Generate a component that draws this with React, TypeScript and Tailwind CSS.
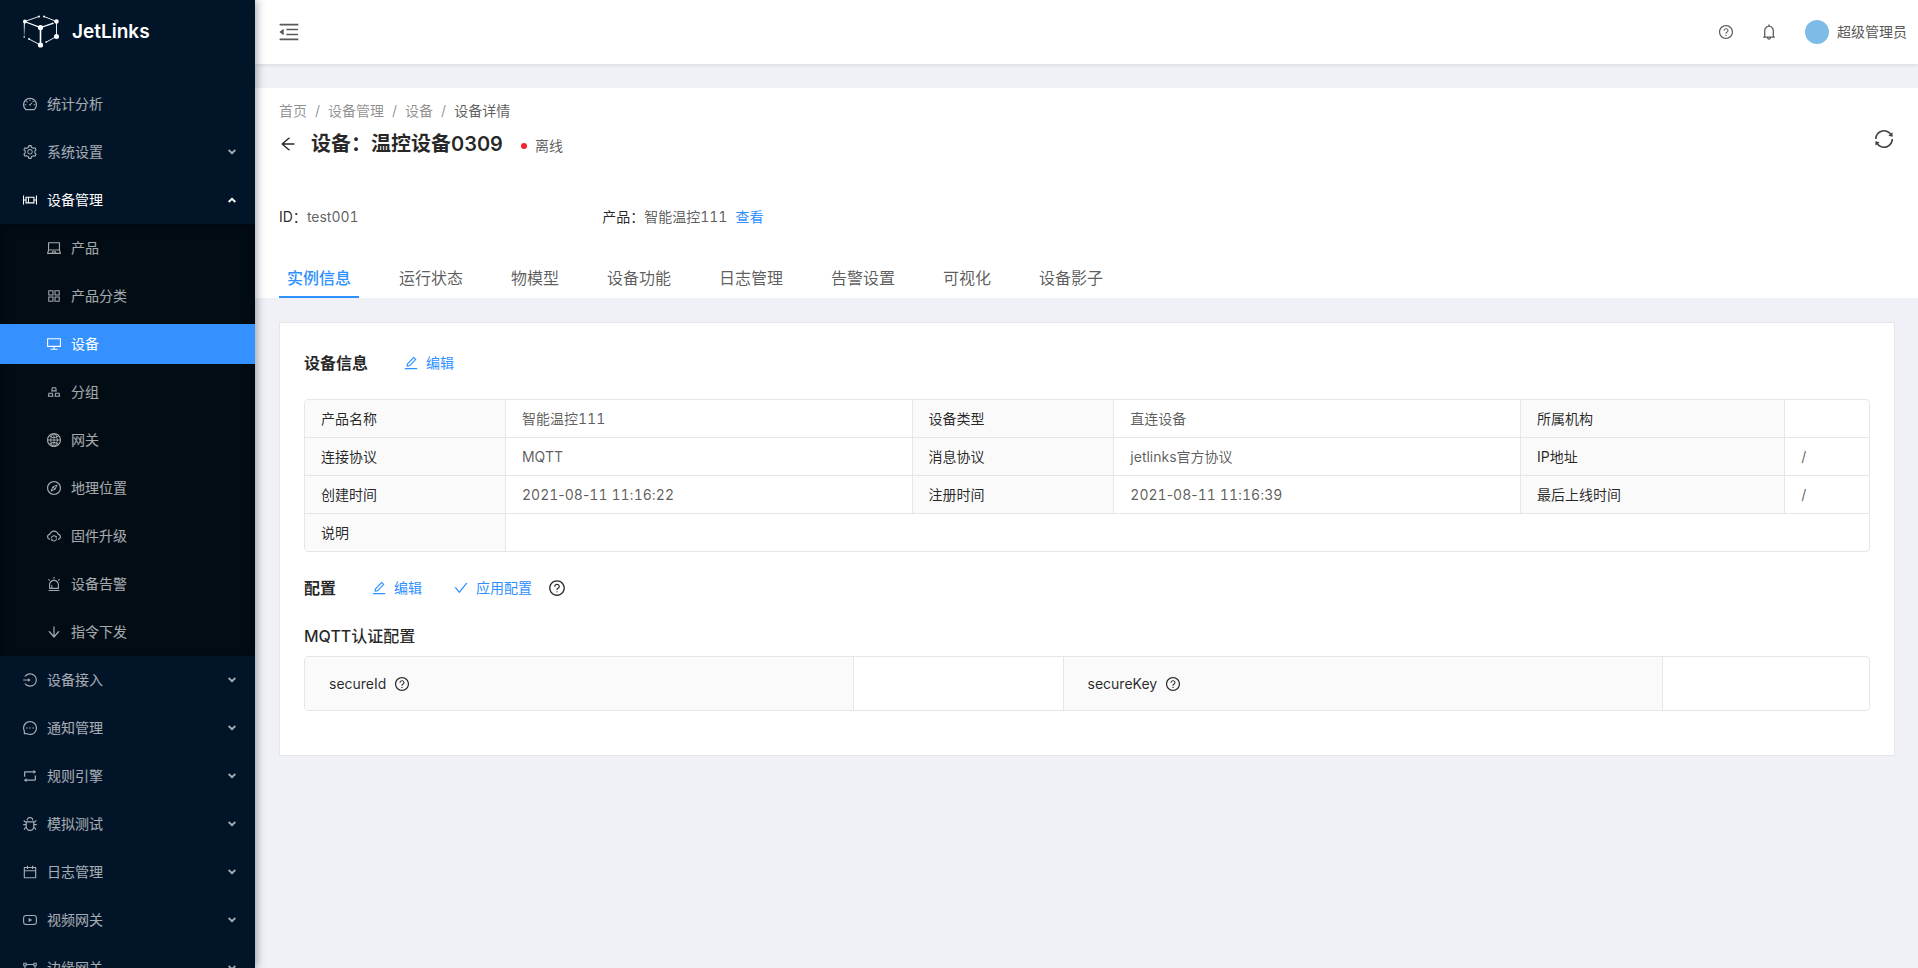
import React from 'react';
import { IconType } from 'react-icons';
import {
  AiOutlineAlert,
  AiOutlineAppstore,
  AiOutlineArrowDown,
  AiOutlineArrowLeft,
  AiOutlineBell,
  AiOutlineBoxPlot,
  AiOutlineBug,
  AiOutlineCalendar,
  AiOutlineCheck,
  AiOutlineCloudSync,
  AiOutlineCompass,
  AiOutlineDashboard,
  AiOutlineDesktop,
  AiOutlineEdit,
  AiOutlineGateway,
  AiOutlineGlobal,
  AiOutlineGold,
  AiOutlineLaptop,
  AiOutlineLogin,
  AiOutlineMenuFold,
  AiOutlineMessage,
  AiOutlineQuestionCircle,
  AiOutlineRetweet,
  AiOutlineSetting,
  AiOutlineSync,
  AiOutlineYoutube,
} from 'react-icons/ai';

interface MenuEntry {
  name: string;
  icon: IconType;
  leaf?: boolean;
  children?: MenuEntry[];
}

const menu: MenuEntry[] = [
  { name: '统计分析', icon: AiOutlineDashboard, leaf: true },
  { name: '系统设置', icon: AiOutlineSetting },
  {
    name: '设备管理',
    icon: AiOutlineBoxPlot,
    children: [
      { name: '产品', icon: AiOutlineLaptop },
      { name: '产品分类', icon: AiOutlineAppstore },
      { name: '设备', icon: AiOutlineDesktop },
      { name: '分组', icon: AiOutlineGold },
      { name: '网关', icon: AiOutlineGlobal },
      { name: '地理位置', icon: AiOutlineCompass },
      { name: '固件升级', icon: AiOutlineCloudSync },
      { name: '设备告警', icon: AiOutlineAlert },
      { name: '指令下发', icon: AiOutlineArrowDown },
    ],
  },
  { name: '设备接入', icon: AiOutlineLogin },
  { name: '通知管理', icon: AiOutlineMessage },
  { name: '规则引擎', icon: AiOutlineRetweet },
  { name: '模拟测试', icon: AiOutlineBug },
  { name: '日志管理', icon: AiOutlineCalendar },
  { name: '视频网关', icon: AiOutlineYoutube },
  { name: '边缘网关', icon: AiOutlineGateway },
];

const tabs = ['实例信息', '运行状态', '物模型', '设备功能', '日志管理', '告警设置', '可视化', '设备影子'];

const infoRows = [
  ['产品名称', '智能温控111', '设备类型', '直连设备', '所属机构', ''],
  ['连接协议', 'MQTT', '消息协议', 'jetlinks官方协议', 'IP地址', '/'],
  ['创建时间', '2021-08-11 11:16:22', '注册时间', '2021-08-11 11:16:39', '最后上线时间', '/'],
];

const Logo: React.FC = () => (
  <svg width="38" height="34" viewBox="0 0 38 34" fill="none" stroke="#fff" aria-hidden="true">
    <defs>
      <linearGradient id="fade" gradientUnits="userSpaceOnUse" x1="0" y1="6" x2="0" y2="22">
        <stop offset="0" stopColor="#fff" />
        <stop offset="1" stopColor="#fff" stopOpacity="0.1" />
      </linearGradient>
    </defs>
    <path d="M1.5 6.5 17.5 12.5 29.8 8.3" strokeWidth="1.3" />
    <path d="M17.5 12.5V30" strokeWidth="1.6" />
    <path d="M1.5 6.5 16 1.5M21 1.5 33.5 6.5V21.5L23.2 27.1M17.5 30 6 24" strokeWidth="0.9" />
    <path d="M1.4 6.5V22" stroke="url(#fade)" strokeWidth="1.3" />
    <g fill="#fff" stroke="none">
      <circle cx="1.9" cy="6.5" r="1.9" />
      <circle cx="17.5" cy="12.5" r="2.6" />
      <circle cx="33.5" cy="6.5" r="2.2" />
      <circle cx="33.5" cy="21.5" r="2.5" />
      <circle cx="17.5" cy="30" r="2.6" />
      <circle cx="16" cy="1.5" r="1" />
      <circle cx="21" cy="1.5" r="1" />
      <circle cx="29.8" cy="8.3" r="0.9" />
      <circle cx="23.2" cy="27.1" r="0.9" />
      <circle cx="1.2" cy="22" r="0.8" />
      <circle cx="6" cy="24" r="0.9" />
    </g>
  </svg>
);

const Chevron: React.FC<{ open?: boolean }> = ({ open }) => (
  <svg
    width="8"
    height="6"
    viewBox="0 0 8 6"
    fill="none"
    stroke="currentColor"
    strokeWidth="1.8"
    className={open ? 'rotate-180' : ''}
    aria-hidden="true"
  >
    <path d="M0.7 1 4 4.2 7.3 1" />
  </svg>
);

// Digits line up between rows while the separators keep their own width
const Figures: React.FC<{ text: string }> = ({ text }) => (
  <>
    {text.split(/(\d+)/).map((part, i) =>
      i % 2 === 1 ? (
        <span key={i} className="tabular-nums">
          {part}
        </span>
      ) : (
        part
      )
    )}
  </>
);

const Sidebar: React.FC = () => (
  <aside className="sticky top-0 z-10 h-screen w-[255px] shrink-0 overflow-hidden bg-[#021428] shadow-[2px_0_8px_rgba(0,21,41,0.35)]">
    <a href="#" className="flex h-16 items-center gap-[11px] pl-[23px]">
      <Logo />
      <h1 className="text-[19px] font-semibold text-white">JetLinks</h1>
    </a>
    <nav className="mt-4 text-sm text-white/65">
      {menu.map((item) => (
        <div key={item.name}>
          <a
            href="#"
            className={`flex h-12 items-center gap-[9px] pr-[19px] pl-[22px] ${item.children ? 'text-white' : ''}`}
          >
            <item.icon className="size-4" />
            <span className="flex-1">{item.name}</span>
            {!item.leaf && <Chevron open={!!item.children} />}
          </a>
          {item.children && (
            <div className="bg-[#020c15] shadow-[inset_0_2px_8px_rgba(0,0,0,0.45)]">
              {item.children.map((child) => (
                <div key={child.name} className="py-1">
                  <a
                    href="#"
                    className={`flex h-10 items-center gap-[9px] pl-[46px] ${
                      child.name === '设备' ? 'bg-[#3591ff] text-white' : ''
                    }`}
                  >
                    <child.icon className="size-4" />
                    {child.name}
                  </a>
                </div>
              ))}
            </div>
          )}
        </div>
      ))}
    </nav>
  </aside>
);

const TopBar: React.FC = () => (
  <header className="relative flex h-16 items-center bg-white pr-[11px] pl-[22px] shadow-[0_1px_4px_rgba(0,21,41,0.1)]">
    <button type="button" aria-label="收起菜单" className="text-[#595959]">
      <AiOutlineMenuFold className="size-6" />
    </button>
    <div className="ml-auto flex items-center text-[#595959]">
      <button type="button" aria-label="帮助" className="px-3">
        <AiOutlineQuestionCircle className="size-4" />
      </button>
      <button type="button" aria-label="消息" className="ml-0.5 px-3">
        <AiOutlineBell className="size-[18px]" />
      </button>
      <button type="button" className="ml-[15px] flex items-center gap-2 text-sm">
        <span className="size-6 rounded-full bg-[#7dbce6]" />
        超级管理员
      </button>
    </div>
  </header>
);

const PageHeader: React.FC = () => (
  <section className="bg-white pt-3 pr-[23px] pl-6">
    <nav className="flex gap-2 text-sm leading-[22px] text-black/45">
      <a href="#">首页</a>
      <span>/</span>
      <a href="#">设备管理</a>
      <span>/</span>
      <a href="#">设备</a>
      <span>/</span>
      <span className="text-black/65">设备详情</span>
    </nav>
    <div className="mt-1.5 flex items-start">
      <div className="flex h-8 items-center text-black/85">
        <button type="button" aria-label="返回" className="mr-3.5">
          <AiOutlineArrowLeft className="size-[18px]" />
        </button>
        <h2 className="text-xl font-semibold">设备：温控设备0309</h2>
        <span className="mt-1 ml-[18px] flex items-center gap-2 text-sm text-black/65">
          <i className="size-1.5 rounded-full bg-[#f5222d]" />
          离线
        </span>
      </div>
      <button type="button" aria-label="刷新" className="ml-auto text-black/75">
        <AiOutlineSync className="size-[22px]" />
      </button>
    </div>
    <dl className="mt-[46px] grid grid-cols-5 text-sm leading-[22px] tabular-nums">
      <div className="flex">
        <dt className="text-black/85">ID：</dt>
        <dd className="text-black/65">test001</dd>
      </div>
      <div className="flex">
        <dt className="text-black/85">产品：</dt>
        <dd className="text-black/65">智能温控111</dd>
        <dd>
          <a href="#" className="ml-2 text-[#2f90ff]">
            查看
          </a>
        </dd>
      </div>
    </dl>
    <div role="tablist" className="mt-8 flex gap-8">
      {tabs.map((tab, i) => (
        <button
          key={tab}
          type="button"
          role="tab"
          aria-selected={i === 0}
          className={`h-[38px] border-b-2 px-2 text-base ${
            i === 0 ? 'border-[#2f90ff] font-medium text-[#2f90ff]' : 'border-transparent text-black/65'
          }`}
        >
          {tab}
        </button>
      ))}
    </div>
  </section>
);

const LinkButton: React.FC<{ icon: IconType; text: string }> = ({ icon: Icon, text }) => (
  <button type="button" className="flex h-8 items-center gap-[7px] pr-4 pl-[15px] text-sm text-[#2f90ff]">
    <Icon className="size-4" />
    {text}
  </button>
);

const label = 'border-r border-[#e6e6e6] bg-[#fafafa] text-left font-normal text-black/85';

const InfoTable: React.FC = () => (
  <div className="overflow-hidden rounded-sm border border-[#e6e6e6]">
    <table className="w-full table-fixed border-separate border-spacing-0 text-sm leading-[22px]">
      <colgroup>
        <col className="w-[12.85%]" />
        <col className="w-[26%]" />
        <col className="w-[12.9%]" />
        <col className="w-[26%]" />
        <col className="w-[16.9%]" />
        <col className="w-[5.35%]" />
      </colgroup>
      <tbody>
        {infoRows.map((row) => (
          <tr key={row[0]}>
            {row.map((cell, i) =>
              i % 2 === 0 ? (
                <th key={i} scope="row" className={`h-[38px] border-b px-4 ${label}`}>
                  {cell}
                </th>
              ) : (
                <td
                  key={i}
                  className="h-[38px] border-r border-b border-[#e6e6e6] px-4 text-black/65 last:border-r-0"
                >
                  <Figures text={cell} />
                </td>
              )
            )}
          </tr>
        ))}
        <tr>
          <th scope="row" className={`h-[37px] px-4 ${label}`}>
            说明
          </th>
          <td colSpan={5} />
        </tr>
      </tbody>
    </table>
  </div>
);

const ConfigTable: React.FC = () => (
  <div className="overflow-hidden rounded-sm border border-[#e6e6e6]">
    <table className="w-full table-fixed border-separate border-spacing-0 text-sm">
      <colgroup>
        <col className="w-[35.1%]" />
        <col className="w-[13.4%]" />
        <col className="w-[38.3%]" />
        <col className="w-[13.2%]" />
      </colgroup>
      <tbody>
        <tr>
          {['secureId', 'secureKey'].map((key) => (
            <React.Fragment key={key}>
              <th scope="row" className={`h-[53px] px-6 ${label}`}>
                <span className="flex items-center gap-2">
                  {key}
                  <AiOutlineQuestionCircle className="size-4" />
                </span>
              </th>
              <td className="border-r border-[#e6e6e6] last:border-r-0" />
            </React.Fragment>
          ))}
        </tr>
      </tbody>
    </table>
  </div>
);

const App: React.FC = () => {
  return (
    <div className="flex min-h-screen bg-[#f0f1f6] font-['Inter','Noto_Sans_CJK_SC',sans-serif]">
      <Sidebar />
      <div className="min-w-0 flex-1">
        <TopBar />
        <main className="pt-6">
          <PageHeader />
          <section className="my-6 mr-[23px] ml-6 border border-[#e6e6e6] bg-white px-6 pt-6 pb-11">
            <div className="mb-5 flex h-8 items-center gap-5">
              <h3 className="text-base font-semibold text-black/85">设备信息</h3>
              <LinkButton icon={AiOutlineEdit} text="编辑" />
            </div>
            <InfoTable />
            <div className="my-5 flex h-8 items-center">
              <h3 className="mr-5 text-base font-semibold text-black/85">配置</h3>
              <LinkButton icon={AiOutlineEdit} text="编辑" />
              <LinkButton icon={AiOutlineCheck} text="应用配置" />
              <AiOutlineQuestionCircle className="size-[18px] text-black/85" />
            </div>
            <h4 className="mb-2 text-base font-medium text-black/85">MQTT认证配置</h4>
            <ConfigTable />
          </section>
        </main>
      </div>
    </div>
  );
};

export default App;
